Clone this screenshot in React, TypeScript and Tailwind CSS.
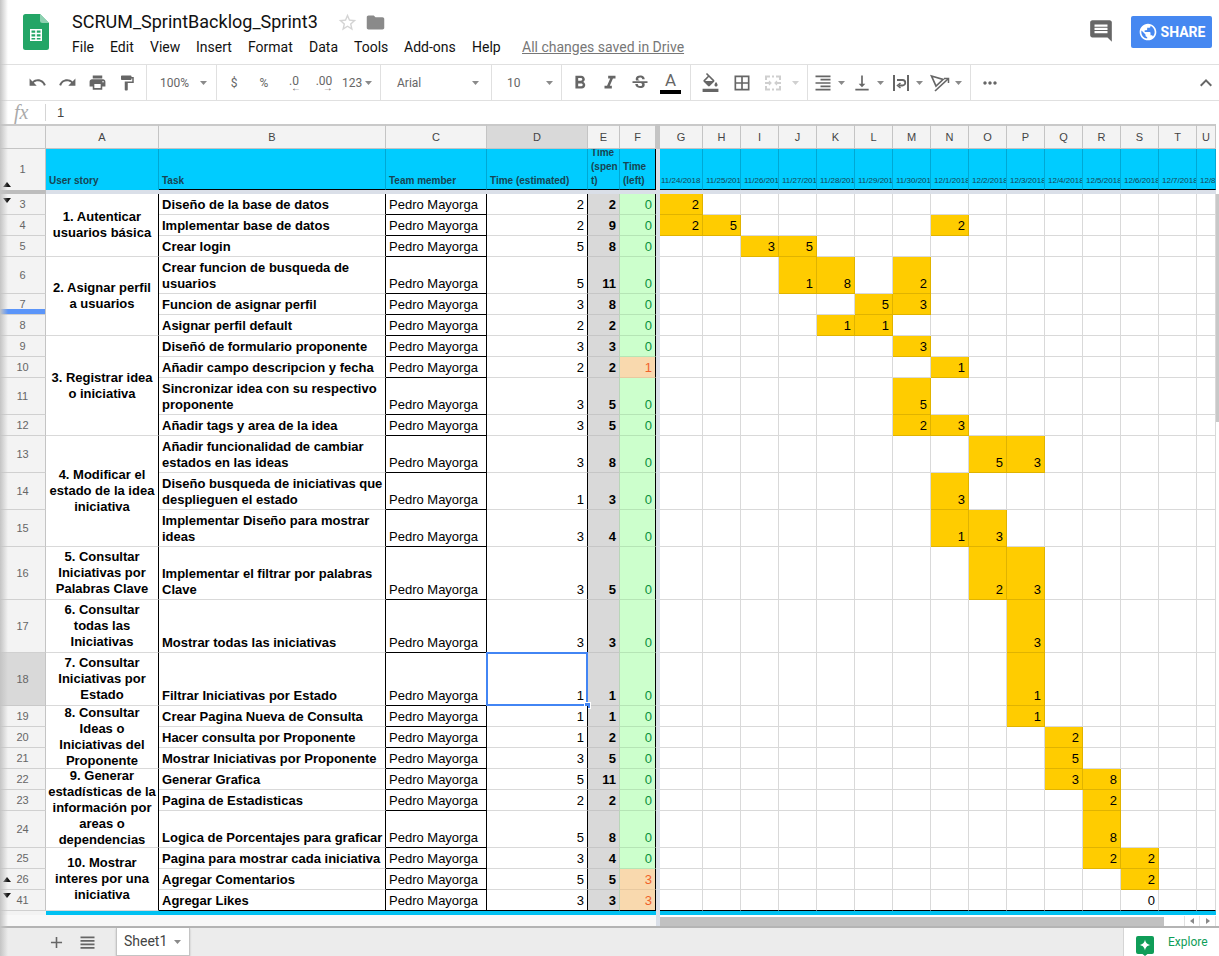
import { Fragment } from "react";
import {
  MdAdd,
  MdBorderAll,
  MdComment,
  MdFolder,
  MdFormatAlignRight,
  MdFormatBold,
  MdFormatColorFill,
  MdFormatItalic,
  MdFormatPaint,
  MdKeyboardArrowUp,
  MdMoreHoriz,
  MdPrint,
  MdPublic,
  MdRedo,
  MdStarBorder,
  MdStrikethroughS,
  MdUndo,
  MdVerticalAlignBottom,
  MdViewHeadline,
} from "react-icons/md";

type Row = {
  n: number;
  h: number;
  task: string;
  est: number;
  spent: number;
  left: number;
  g: Record<string, number>;
};

const MENU = ["File", "Edit", "View", "Insert", "Format", "Data", "Tools", "Add-ons", "Help"];
const MENU_W = ["w-[38px]", "w-[40px]", "w-[46px]", "w-[52px]", "w-[61px]", "w-[45px]", "w-[50px]", "w-[68px]", "w-[50px]"];
const GANTT = ["G", "H", "I", "J", "K", "L", "M", "N", "O", "P", "Q", "R", "S", "T", "U"];
const DATES = [
  "11/24/2018", "11/25/2018", "11/26/2018", "11/27/2018", "11/28/2018", "11/29/2018", "11/30/2018", "12/1/2018",
  "12/2/2018", "12/3/2018", "12/4/2018", "12/5/2018", "12/6/2018", "12/7/2018", "12/8/2018",
];

const ROWS: Row[] = [
  { n: 3, h: 21, task: "Diseño de la base de datos", est: 2, spent: 2, left: 0, g: { G: 2 } },
  { n: 4, h: 21, task: "Implementar base de datos", est: 2, spent: 9, left: 0, g: { G: 2, H: 5, N: 2 } },
  { n: 5, h: 21, task: "Crear login", est: 5, spent: 8, left: 0, g: { I: 3, J: 5 } },
  { n: 6, h: 37, task: "Crear funcion de busqueda de usuarios", est: 5, spent: 11, left: 0, g: { J: 1, K: 8, M: 2 } },
  { n: 7, h: 21, task: "Funcion de asignar perfil", est: 3, spent: 8, left: 0, g: { L: 5, M: 3 } },
  { n: 8, h: 21, task: "Asignar perfil default", est: 2, spent: 2, left: 0, g: { K: 1, L: 1 } },
  { n: 9, h: 21, task: "Diseñó de formulario proponente", est: 3, spent: 3, left: 0, g: { M: 3 } },
  { n: 10, h: 21, task: "Añadir campo descripcion y fecha", est: 2, spent: 2, left: 1, g: { N: 1 } },
  { n: 11, h: 37, task: "Sincronizar idea con su respectivo proponente", est: 3, spent: 5, left: 0, g: { M: 5 } },
  { n: 12, h: 21, task: "Añadir tags y area de la idea", est: 3, spent: 5, left: 0, g: { M: 2, N: 3 } },
  { n: 13, h: 37, task: "Añadir funcionalidad de cambiar estados en las ideas", est: 3, spent: 8, left: 0, g: { O: 5, P: 3 } },
  { n: 14, h: 37, task: "Diseño busqueda de iniciativas que desplieguen el estado", est: 1, spent: 3, left: 0, g: { N: 3 } },
  { n: 15, h: 37, task: "Implementar Diseño para mostrar ideas", est: 3, spent: 4, left: 0, g: { N: 1, O: 3 } },
  { n: 16, h: 53, task: "Implementar el filtrar por palabras Clave", est: 3, spent: 5, left: 0, g: { O: 2, P: 3 } },
  { n: 17, h: 53, task: "Mostrar todas las iniciativas", est: 3, spent: 3, left: 0, g: { P: 3 } },
  { n: 18, h: 53, task: "Filtrar Iniciativas por Estado", est: 1, spent: 1, left: 0, g: { P: 1 } },
  { n: 19, h: 21, task: "Crear Pagina Nueva de Consulta", est: 1, spent: 1, left: 0, g: { P: 1 } },
  { n: 20, h: 21, task: "Hacer consulta por Proponente", est: 1, spent: 2, left: 0, g: { Q: 2 } },
  { n: 21, h: 21, task: "Mostrar Iniciativas por Proponente", est: 3, spent: 5, left: 0, g: { Q: 5 } },
  { n: 22, h: 21, task: "Generar Grafica", est: 5, spent: 11, left: 0, g: { Q: 3, R: 8 } },
  { n: 23, h: 21, task: "Pagina de Estadisticas", est: 2, spent: 2, left: 0, g: { R: 2 } },
  { n: 24, h: 37, task: "Logica de Porcentajes para graficar", est: 5, spent: 8, left: 0, g: { R: 8 } },
  { n: 25, h: 21, task: "Pagina para mostrar cada iniciativa", est: 3, spent: 4, left: 0, g: { R: 2, S: 2 } },
  { n: 26, h: 21, task: "Agregar Comentarios", est: 5, spent: 5, left: 3, g: { S: 2 } },
  { n: 41, h: 21, task: "Agregar Likes", est: 3, spent: 3, left: 3, g: {} },
];

// merged user story cells, keyed by the row they start on
const STORIES: Record<number, { span: number; text: string }> = {
  3: { span: 3, text: "1. Autenticar usuarios básica" },
  6: { span: 3, text: "2. Asignar perfil a usuarios" },
  9: { span: 4, text: "3. Registrar idea o iniciativa" },
  13: { span: 3, text: "4. Modificar el estado de la idea iniciativa" },
  16: { span: 1, text: "5. Consultar Iniciativas por Palabras Clave" },
  17: { span: 1, text: "6. Consultar todas las Iniciativas" },
  18: { span: 1, text: "7. Consultar Iniciativas por Estado" },
  19: { span: 3, text: "8. Consultar Ideas o Iniciativas del Proponente" },
  22: { span: 3, text: "9. Generar estadísticas de la información por areas o dependencias" },
  25: { span: 3, text: "10. Mostrar interes por una iniciativa" },
};

function Caret({ light = false }: { light?: boolean }) {
  return (
    <svg width="7" height="4" viewBox="0 0 7 4" className="shrink-0">
      <path d="M0 0h7L3.5 4z" fill={light ? "#d0d0d0" : "#8a8a8a"} />
    </svg>
  );
}

function TriUp() {
  return (
    <svg width="8" height="5" viewBox="0 0 8 5" className="absolute left-[3px] top-[-2px]">
      <path d="M0 5h8L4 0z" fill="#111" />
    </svg>
  );
}

function TriDown() {
  return (
    <svg width="8" height="5" viewBox="0 0 8 5" className="absolute left-[3px] top-0">
      <path d="M0 0h8L4 5z" fill="#111" />
    </svg>
  );
}

function SheetsLogo() {
  return (
    <svg width="26" height="36" viewBox="0 0 26 36">
      <path d="M2.5 0H17l9 9v24.5a2.5 2.5 0 0 1-2.5 2.5h-21A2.5 2.5 0 0 1 0 33.500V2.500A2.500 2.500 0 0 1 2.500 0z" fill="#23a566" />
      <path d="M17 0l9 9h-6.500A2.500 2.500 0 0 1 17 6.500z" fill="#8ed1b1" />
      <path d="M7 15h12v12H7zM8.500 16.500v2.300h3.700v-2.300zM13.800 16.500v2.300h3.700v-2.300zM8.500 20.300v2.300h3.700v-2.300zM13.800 20.300v2.300h3.700v-2.300zM8.500 24.100v1.400h3.700v-1.400zM13.800 24.100v1.400h3.700v-1.400z" fill="#fff" fillRule="evenodd" />
    </svg>
  );
}

function MergeIcon() {
  return (
    <svg width="18" height="18" viewBox="0 0 18 18" fill="none" stroke="#cfcfcf" strokeWidth="2">
      <path d="M2 6V2.500h4M8 2.500h2M12 2.500h4V6M2 12v3.500h4M8 15.500h2M12 15.500h4V12" />
      <path d="M1 9h6M17 9h-6" />
      <path d="M5 7l2 2-2 2M13 7l-2 2 2 2" strokeWidth="1.200" />
    </svg>
  );
}

function WrapIcon() {
  return (
    <svg width="18" height="18" viewBox="0 0 18 18" fill="none" stroke="#666" strokeWidth="1.800">
      <path d="M2 1v16M16 1v16" strokeWidth="2" />
      <path d="M5 6h5.500a2.500 2.500 0 0 1 0 5.500H7" />
      <path d="M8.500 9L5.500 11.500 8.500 14" strokeWidth="1.500" />
    </svg>
  );
}

function RotateIcon() {
  return (
    <svg width="20" height="18" viewBox="0 0 20 18" fill="none" stroke="#666" strokeWidth="1.700">
      <path d="M1.500 2L13 5.500 6 12z" />
      <path d="M5 17L18 5" />
      <path d="M14 4.500h4.500V9" strokeWidth="1.500" />
    </svg>
  );
}

function ExploreIcon() {
  return (
    <svg width="18" height="20" viewBox="0 0 18 20">
      <path d="M2 0h14a2 2 0 0 1 2 2v14a2 2 0 0 1-2 2h-4.500L9 20l-2.500-2H2a2 2 0 0 1-2-2V2a2 2 0 0 1 2-2z" fill="#0f9d58" />
      <path d="M9 3.500C9.700 7 11 8.300 14.500 9 11 9.700 9.700 11 9 14.500 8.300 11 7 9.700 3.500 9 7 8.300 8.300 7 9 3.500z" fill="#fff" />
    </svg>
  );
}

function Btn({ children, w = "w-[30px]" }: { children: React.ReactNode; w?: string }) {
  return <div className={`${w} flex shrink-0 items-center justify-center text-[#666]`}>{children}</div>;
}

function IconCaret({ children }: { children: React.ReactNode }) {
  return (
    <div className="flex w-[39px] shrink-0 items-center">
      <div className="flex w-[24px] items-center justify-center">{children}</div>
      <div className="ml-[3px]">
        <Caret />
      </div>
    </div>
  );
}

function Toolbar() {
  return (
    <div className="flex h-[37px] border-y border-[#e0e0e0] font-['Roboto',sans-serif] text-[12px] text-[#666]">
      <div className="flex w-[147px] items-center border-r border-[#e0e0e0] pl-[22px]">
        <Btn><MdUndo size={19} /></Btn>
        <Btn><MdRedo size={19} /></Btn>
        <Btn><MdPrint size={19} /></Btn>
        <Btn><MdFormatPaint size={18} /></Btn>
      </div>
      <div className="flex w-[70px] items-center justify-between border-r border-[#e0e0e0] pl-[13px] pr-[9px]">
        <span>100%</span>
        <Caret />
      </div>
      <div className="flex w-[164px] items-center border-r border-[#e0e0e0] pl-[2px]">
        <Btn>$</Btn>
        <Btn>%</Btn>
        <Btn>
          <div className="relative mt-[-3px]">
            .0
            <span className="absolute left-[2px] top-[11px] text-[10px] leading-[10px]">←</span>
          </div>
        </Btn>
        <Btn>
          <div className="relative mt-[-3px]">
            .00
            <span className="absolute left-[7px] top-[11px] text-[10px] leading-[10px]">→</span>
          </div>
        </Btn>
        <span className="ml-[3px]">123</span>
        <div className="ml-[3px]">
          <Caret />
        </div>
      </div>
      <div className="flex w-[111px] items-center justify-between border-r border-[#e0e0e0] pl-[16px] pr-[12px]">
        <span>Arial</span>
        <Caret />
      </div>
      <div className="flex w-[70px] items-center justify-between border-r border-[#e0e0e0] pl-[15px] pr-[8px]">
        <span>10</span>
        <Caret />
      </div>
      <div className="flex w-[129px] items-center border-r border-[#e0e0e0] pl-[3px]">
        <Btn><MdFormatBold size={22} /></Btn>
        <Btn><MdFormatItalic size={22} /></Btn>
        <Btn><MdStrikethroughS size={20} /></Btn>
        <Btn w="w-[31px]">
          <div className="flex flex-col items-center">
            <span className="text-[17px] leading-[17px]">A</span>
            <div className="mt-[1px] h-[4px] w-[21px] bg-black" />
          </div>
        </Btn>
      </div>
      <div className="flex w-[117px] items-center border-r border-[#e0e0e0] pl-[4px]">
        <Btn w="w-[31px]"><MdFormatColorFill size={19} /></Btn>
        <Btn w="w-[31px]"><MdBorderAll size={20} /></Btn>
        <Btn w="w-[31px]"><MergeIcon /></Btn>
        <div className="ml-[4px]">
          <Caret light />
        </div>
      </div>
      <div className="flex w-[163px] items-center border-r border-[#e0e0e0] pl-[3px]">
        <IconCaret><MdFormatAlignRight size={20} /></IconCaret>
        <IconCaret><MdVerticalAlignBottom size={20} /></IconCaret>
        <IconCaret><WrapIcon /></IconCaret>
        <IconCaret><RotateIcon /></IconCaret>
      </div>
      <div className="flex flex-1 items-center justify-between pl-[9px] pr-[1px]">
        <MdMoreHoriz size={20} />
        <MdKeyboardArrowUp size={24} />
      </div>
    </div>
  );
}

const colHead = "flex items-center justify-center border-r border-b border-t-2 border-r-[#c4c4c4] border-b-[#c4c4c4] border-t-[#c9c9c9] bg-[#f3f3f3] text-[11px] text-[#444]";
const blueHead = "flex items-end overflow-hidden border-b border-r border-r-[#00a8d4] bg-[#00ccff] pb-[1px] pl-[3px] text-[10px] font-bold leading-[14px] text-[#174553]";

function SheetGrid() {
  return (
    <div className="grid w-[1216px] grid-cols-[46px_113px_227px_101px_101px_32px_36px_4px_43px_repeat(13,38px)_19px] grid-rows-[25px_41px_4px_21px_21px_21px_37px_21px_21px_21px_21px_37px_21px_37px_37px_37px_53px_53px_53px_21px_21px_21px_21px_21px_37px_21px_21px_21px_4px]">
      {/* column letters */}
      <div className="border-r border-b border-t-2 border-r-[#c4c4c4] border-b-[#c4c4c4] border-t-[#c9c9c9] bg-[#f3f3f3]" />
      <div className={colHead}>A</div>
      <div className={colHead}>B</div>
      <div className={colHead}>C</div>
      <div className={`${colHead} !bg-[#d9d9d9]`}>D</div>
      <div className={colHead}>E</div>
      <div className={colHead}>F</div>
      <div className="bg-[#c4c4c4]" />
      {GANTT.map((c) => (
        <div key={c} className={colHead}>{c}</div>
      ))}

      {/* header row */}
      <div className="relative flex items-center justify-center border-r border-r-[#c4c4c4] bg-[#f3f3f3] text-[11px] text-[#666]">
        1
        <div className="absolute bottom-[6px] left-0 h-0 w-full">
          <TriUp />
        </div>
      </div>
      <div className={`${blueHead} border-b-[#00ccff]`}>User story</div>
      <div className={`${blueHead} border-b-black`}>Task</div>
      <div className={`${blueHead} border-b-black`}>Team member</div>
      <div className={`${blueHead} border-b-black`}>Time (estimated)</div>
      <div className={`${blueHead} border-b-black break-all`}>Time (spent)</div>
      <div className={`${blueHead} border-b-black !border-r-black`}>Time (left)</div>
      <div className="bg-[#dadfe8]" />
      {GANTT.map((c, i) => (
        <div
          key={c}
          className={`flex items-end overflow-hidden whitespace-nowrap border-b border-r border-b-black border-r-[#00a8d4] bg-[#00ccff] pb-[3px] text-[8px] leading-[10px] text-[#174553] ${
            i === 0 ? "pl-[1px]" : "pl-[3px]"
          }`}
        >
          {DATES[i]}
        </div>
      ))}

      {/* frozen row gap */}
      <div className="bg-[#bdbdbd]" />
      <div className="col-span-22 bg-[#dadfe8]" />

      {ROWS.map((r) => {
        const story = STORIES[r.n];
        const last = r.n === 41;
        const selected = r.n === 18;
        const warn = r.left > 0;
        return (
          <Fragment key={r.n}>
            <div
              className={`relative flex items-center justify-center border-b border-r border-r-[#c4c4c4] text-[11px] text-[#666] ${
                selected ? "border-b-[#c9c9c9] bg-[#d9d9d9]" : "border-b-[#d0d0d0] bg-[#f3f3f3]"
              }`}
            >
              {r.n}
              {r.n === 3 && <div className="absolute left-0 top-[4px]"><TriDown /></div>}
              {r.n === 26 && <div className="absolute left-0 top-[10px]"><TriUp /></div>}
              {r.n === 41 && <div className="absolute left-0 top-[3px]"><TriDown /></div>}
              {r.n === 7 && <div className="absolute bottom-0 left-0 h-[5px] w-full bg-[#5b95f9]" />}
            </div>
            {story && (
              <div
                className="flex items-center justify-center overflow-hidden border-b border-r border-b-[#d9d9d9] border-r-black bg-white px-[2px] text-center text-[13px] font-bold leading-4 text-black"
                style={{ gridRow: `span ${story.span}` }}
              >
                <span>{story.text}</span>
              </div>
            )}
            <div
              className={`flex items-end border-b border-r border-r-black bg-white pb-[1px] pl-[3px] text-[13px] font-bold leading-4 text-black ${
                last ? "border-b-black" : "border-b-[#d9d9d9]"
              }`}
            >
              <span>{r.task}</span>
            </div>
            <div className="flex items-end overflow-hidden whitespace-nowrap border-b border-r border-black bg-white pb-[1px] pl-[3px] text-[13px] leading-4 text-black">
              Pedro Mayorga
            </div>
            <div
              className={`relative flex items-end justify-end border-b border-r border-r-black bg-white pb-[1px] pr-[3px] text-[13px] leading-4 text-black ${
                last ? "border-b-black" : "border-b-[#d9d9d9]"
              }`}
            >
              {r.est}
              {selected && (
                <div className="absolute inset-x-[-1px] inset-y-[-1px] border-2 border-[#4285f4]">
                  <div className="absolute bottom-[-5px] right-[-5px] h-[7px] w-[7px] border border-white bg-[#4285f4]" />
                </div>
              )}
            </div>
            <div
              className={`flex items-end justify-end border-b border-r border-r-[#b9d5b9] bg-[#d9d9d9] pb-[1px] pr-[3px] text-[13px] font-bold leading-4 text-black ${
                last ? "border-b-black" : "border-b-[#c6c6c6]"
              }`}
            >
              {r.spent}
            </div>
            <div
              className={`flex items-end justify-end border-b border-r border-r-black pb-[1px] pr-[3px] text-[13px] leading-4 ${
                warn ? "bg-[#f9d9ae] text-[#f0622a]" : "bg-[#ccffcc] text-[#0a8f3c]"
              } ${last ? "border-b-black" : warn ? "border-b-[#e8c9a0]" : "border-b-[#b5e5b5]"}`}
            >
              {r.left}
            </div>
            <div className="bg-[#dadfe8]" />
            {GANTT.map((c) => {
              const v = r.g[c];
              const filled = v !== undefined;
              return (
                <div
                  key={c}
                  className={`flex items-end justify-end border-b border-r pb-[1px] pr-[3px] text-[13px] leading-4 text-black ${
                    filled ? "border-r-[#e0b300] bg-[#ffcc00]" : "border-r-[#d9d9d9] bg-white"
                  } ${last ? "border-b-black" : filled ? "border-b-[#e0b300]" : "border-b-[#d9d9d9]"}`}
                >
                  {filled ? v : last && c === "S" ? 0 : ""}
                </div>
              );
            })}
          </Fragment>
        );
      })}

      {/* closing blue band */}
      <div className="bg-[#f3f3f3]" />
      <div className="col-span-6 bg-[#00c1f2]" />
      <div className="bg-[#dadfe8]" />
      <div className="col-span-15 bg-[#00c1f2]" />
    </div>
  );
}

export default function App() {
  return (
    <div className="relative h-[956px] w-[1219px] overflow-hidden bg-white font-['Liberation_Sans',Arial,sans-serif] text-black">
      {/* title bar */}
      <div className="flex h-[64px]">
        <div className="w-[72px] shrink-0 pl-[23px] pt-[14px]">
          <SheetsLogo />
        </div>
        <div className="font-['Roboto',sans-serif]">
          <div className="flex h-[34px] items-center pt-[10px]">
            <span className="w-[265px] text-[18px] leading-6 text-[#111]">SCRUM_SprintBacklog_Sprint3</span>
            <MdStarBorder size={21} className="text-[#d4d4d4]" />
            <MdFolder size={21} className="ml-[7px] text-[#8a8a8a]" />
          </div>
          <div className="mt-[3px] flex text-[14px] leading-5 text-[#111]">
            {MENU.map((m, i) => (
              <div key={m} className={MENU_W[i]}>{m}</div>
            ))}
            <span className="text-[#777] underline">All changes saved in Drive</span>
          </div>
        </div>
        <div className="ml-auto flex items-start pr-[7px] pt-[16px]">
          <MdComment size={26} className="mr-[17px] mt-[2px] text-[#666]" />
          <div className="flex h-[32px] w-[81px] items-center justify-center gap-[3px] rounded-[2px] bg-[#4688f1] font-['Roboto',sans-serif] text-[14px] font-bold text-white">
            <MdPublic size={20} />
            SHARE
          </div>
        </div>
      </div>

      <Toolbar />

      {/* formula bar */}
      <div className="flex h-[23px] items-center">
        <div className="w-[46px] border-r border-[#d5d5d5] pl-[14px] font-['Liberation_Serif',serif] text-[20px] italic leading-[17px] text-[#aaa]">
          fx
        </div>
        <span className="pl-[11px] text-[13px] text-[#444]">1</span>
      </div>

      <div className="flex">
        <SheetGrid />
        <div className="w-[3px] pt-[70px]">
          <div className="h-[228px] bg-[#c8c8c8]" />
        </div>
      </div>

      {/* horizontal scrollbar */}
      <div className="flex h-[11px]">
        <div className="w-[656px] bg-[#f8f8f8]" />
        <div className="w-[4px] bg-[#dadfe8]" />
        <div className="flex flex-1 items-center bg-white pt-[1px]">
          <div className="h-[9px] w-[504px] bg-[#c1c1c1]" />
          <div className="ml-auto flex h-full w-[32px] text-[#999]">
            <div className="flex w-[16px] items-center justify-center border-x border-[#e0e0e0]">
              <svg width="4" height="6" viewBox="0 0 4 6"><path d="M4 0v6L0 3z" fill="#888" /></svg>
            </div>
            <div className="flex w-[16px] items-center justify-center border-r border-[#e0e0e0]">
              <svg width="4" height="6" viewBox="0 0 4 6"><path d="M0 0v6l4-3z" fill="#888" /></svg>
            </div>
          </div>
          <div className="w-[3px]" />
        </div>
      </div>

      {/* sheet tabs */}
      <div className="flex h-[30px] border-t-2 border-[#b4b4b4] bg-[#ececec] font-['Roboto',sans-serif]">
        <div className="flex w-[116px] items-center pl-[47px] text-[#666]">
          <MdAdd size={19} />
          <MdViewHeadline size={21} className="ml-[11px]" />
        </div>
        <div className="flex h-[28px] w-[74px] items-center gap-[7px] border-x border-b border-[#c4c4c4] bg-white pl-[7px] text-[14px] text-[#444] shadow-[0_1px_2px_rgba(0,0,0,0.2)]">
          Sheet1
          <Caret />
        </div>
        <div className="ml-auto flex w-[96px] items-center border-l border-[#d5d5d5] bg-white pl-[12px] text-[12px] text-[#0f9d58]">
          <div className="mt-[7px]">
            <ExploreIcon />
          </div>
          <span className="ml-[14px]">Explore</span>
        </div>
      </div>

      {/* window shadow on the left edge */}
      <div className="pointer-events-none absolute inset-y-0 left-0 w-[8px] bg-gradient-to-r from-[#c4c4c4] to-transparent" />
    </div>
  );
}
